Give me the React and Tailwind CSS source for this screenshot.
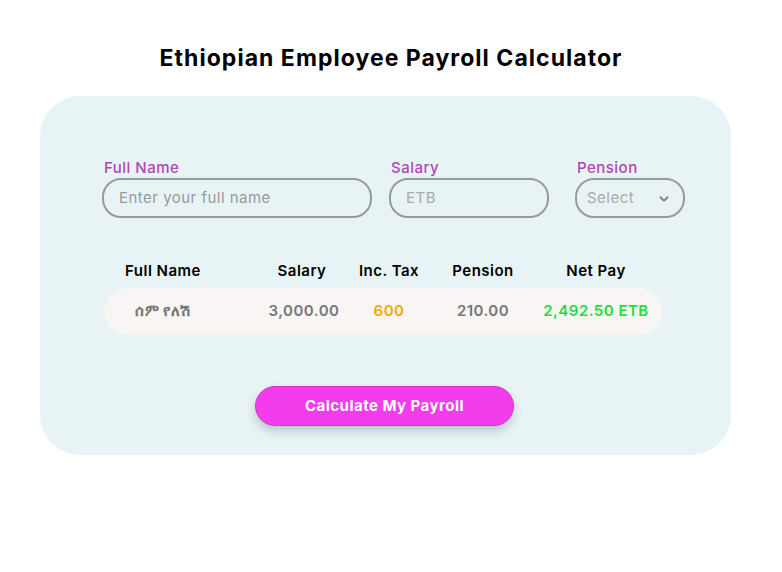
import { ChevronDown } from 'lucide-react'

const cols = [
  'w-[118px]',
  'ml-[20px] w-[120px]',
  'w-[54px]',
  'ml-[27px] w-[80px]',
  'w-[146px]',
]

function Field({ label, className, children }) {
  return (
    <div className={className}>
      <label className="block pl-[2px] text-[15px] font-medium leading-[18px] text-[#b444b5]">{label}</label>
      <div className="mt-[1px] flex h-[40px] items-center rounded-[19px] border-2 border-[#9a9a9a] px-[15px]">
        {children}
      </div>
    </div>
  )
}

export default function App() {
  const headers = ['Full Name', 'Salary', 'Inc. Tax', 'Pension', 'Net Pay']
  const values = [
    { text: 'ሰም የለሽ', cls: 'text-[#777]' },
    { text: '3,000.00', cls: 'text-[#777] translate-x-[2px]' },
    { text: '600', cls: 'text-[#f2a900]' },
    { text: '210.00', cls: 'text-[#777]' },
    { text: '2,492.50 ETB', cls: 'text-[#22dd3f]' },
  ]

  return (
    <div className="min-h-[572px] bg-white font-['Inter',sans-serif] tracking-[0.03em] text-black">
      <h1 className="pt-[44px] text-center text-[23px] font-bold leading-[28px] tracking-[0.045em]">
        Ethiopian Employee Payroll Calculator
      </h1>

      <div className="ml-10 mt-[24px] w-[691px] rounded-[40px] bg-[#e7f3f5] pb-[29px] pl-[62px] pt-[63px]">
        <div className="flex">
          <Field label="Full Name" className="w-[270px] shrink-0">
            <input
              className="w-full bg-transparent text-[15px] outline-none placeholder:text-[#999]"
              placeholder="Enter your full name"
            />
          </Field>
          <Field label="Salary" className="ml-[17px] w-[160px] shrink-0">
            <input className="w-full bg-transparent text-[15px] outline-none placeholder:text-[#aaa]" placeholder="ETB" />
          </Field>
          <Field label="Pension" className="ml-[26px] w-[110px] shrink-0">
            <div className="flex w-full items-center justify-between text-[15px] text-[#aaa]">
              <span className="-ml-[5px]">Select</span>
              <ChevronDown size={14} strokeWidth={3.5} className="-mr-[3px] mt-[1px] text-[#888]" />
            </div>
          </Field>
        </div>

        <div className="ml-[2px] mt-[40px] w-[558px]">
          <div className="flex h-[26px] items-center text-[15px] font-semibold">
            {headers.map((h, i) => (
              <div key={h} className={`${cols[i]} flex shrink-0 justify-center whitespace-nowrap`}>
                {h}
              </div>
            ))}
          </div>
          <div className="mt-[4px] flex h-[47px] items-center rounded-[24px] bg-[#f8f5f4] text-[15px] font-semibold">
            {values.map((v, i) => (
              <div key={i} className={`${cols[i]} flex shrink-0 justify-center whitespace-nowrap`}>
                <span className={v.cls}>{v.text}</span>
              </div>
            ))}
          </div>
        </div>

        <div className="ml-[153px] mt-[51px]">
          <button className="h-[40px] w-[259px] rounded-full border border-[#d634cf] bg-[#f33ceb] text-[15px] font-bold text-white shadow-[0_5px_10px_rgba(0,0,0,0.18)]">
            Calculate My Payroll
          </button>
        </div>
      </div>
    </div>
  )
}
